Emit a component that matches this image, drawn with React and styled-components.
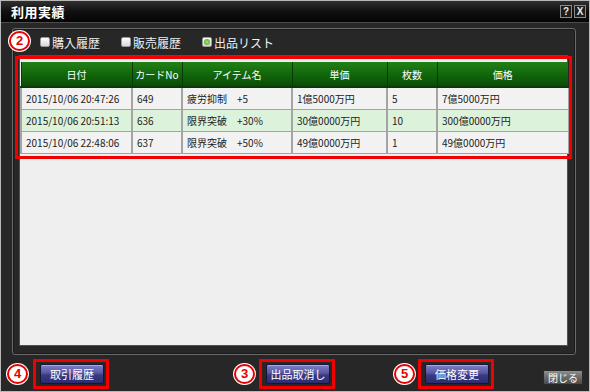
import styled, { createGlobalStyle } from "styled-components";

const GlobalStyle = createGlobalStyle`
  html, body {
    margin: 0;
    padding: 0;
    background: #c0c0c0;
  }
  body {
    font-family: "Noto Sans CJK JP", "Noto Sans", sans-serif;
  }
`;

const columns = [
  { key: "date", label: "日付", width: 111 },
  { key: "card", label: "カードNo", width: 50 },
  { key: "item", label: "アイテム名", width: 110 },
  { key: "unit", label: "単価", width: 95 },
  { key: "qty", label: "枚数", width: 50 },
  { key: "price", label: "価格", width: 131 },
];

const rows = [
  { date: "2015/10/06 20:47:26", card: "649", item: "疲労抑制　+5", unit: "1億5000万円", qty: "5", price: "7億5000万円" },
  { date: "2015/10/06 20:51:13", card: "636", item: "限界突破　+30%", unit: "30億0000万円", qty: "10", price: "300億0000万円" },
  { date: "2015/10/06 22:48:06", card: "637", item: "限界突破　+50%", unit: "49億0000万円", qty: "1", price: "49億0000万円" },
];

const Window = styled.div`
  width: 590px;
  height: 392px;
  box-sizing: border-box;
  border: 1px solid #b8b8b8;
  background: #272727;
  display: flex;
  flex-direction: column;
`;

const TitleBar = styled.div`
  height: 21px;
  flex-shrink: 0;
  display: flex;
  align-items: center;
  padding: 0 3px 0 10px;
  background: linear-gradient(#303030, #101010 50%, #050505);
  border-bottom: 1px solid #4c4c4c;
`;

const Title = styled.div`
  flex: 1;
  color: #fff;
  font-size: 13px;
  font-weight: bold;
  letter-spacing: 0.5px;
`;

const TitleButton = styled.div`
  width: 10px;
  height: 11px;
  margin-left: 2px;
  border: 1px solid #8a8a8a;
  background: #1c1c1c;
  color: #e8e8e8;
  font-family: "Liberation Sans", sans-serif;
  font-size: 10px;
  font-weight: bold;
  line-height: 11px;
  text-align: center;
`;

const Content = styled.div`
  flex: 1;
  display: flex;
  flex-direction: column;
  padding: 5px 13px 0 11px;
`;

const Group = styled.div`
  position: relative;
  height: 327px;
  box-sizing: border-box;
  border: 1px solid #6a6a6a;
  border-radius: 3px;
  box-shadow: inset 0 0 0 1px #1a1a1a;
  padding: 0 7px 8px 6px;
  display: flex;
  flex-direction: column;
`;

const OptionRow = styled.div`
  height: 26px;
  display: flex;
  align-items: center;
  padding-left: 21px;
  gap: 21px;
`;

const Option = styled.label`
  display: flex;
  align-items: center;
  gap: 2px;
  color: #f0f0f0;
  font-size: 12px;
`;

const Box = styled.span`
  width: 10px;
  height: 10px;
  border-radius: 2px;
  background: linear-gradient(#ffffff, #d8d8d8);
  border: 1px solid #9a9a9a;
  box-sizing: border-box;
  display: flex;
  align-items: center;
  justify-content: center;
  &::after {
    content: "";
    display: ${(p) => (p.$checked ? "block" : "none")};
    width: 6px;
    height: 6px;
    border-radius: 50%;
    background: radial-gradient(#a8e870, #3f9a1a);
  }
`;

const ListBox = styled.div`
  flex: 1;
  background: #efefef;
  border: 1px solid #505050;
  padding-top: 6px;
`;

const Highlight = styled.div`
  position: relative;
  &::after {
    content: "";
    position: absolute;
    top: -6px;
    left: -5px;
    right: -5px;
    bottom: -5px;
    border: 3px solid #f00000;
    pointer-events: none;
  }
`;

const Table = styled.table`
  width: 547px;
  border-collapse: collapse;
  table-layout: fixed;
  font-size: 10px;
`;

const Th = styled.th`
  height: 24px;
  padding: 0;
  font-weight: normal;
  color: #ffffff;
  background: linear-gradient(#237f17, #136a0c 45%, #0b4d06);
  border-left: 1px solid #0a3a05;
  border-bottom: 2px solid #0a3a05;
`;

const Tr = styled.tr`
  background: ${(p) => (p.$alt ? "#dcf2da" : "#f2f2f2")};
`;

const Td = styled.td`
  height: 21px;
  padding: 0 4px;
  color: #1c1c1c;
  white-space: nowrap;
  border: 1px solid #a4a4a4;
  border-left-width: 2px;
`;

const BottomBar = styled.div`
  flex: 1;
  display: flex;
  align-items: center;
  margin: 0 -12px 0 -5px;
  padding-top: 2px;
`;

const Marker = styled.span`
  width: 17px;
  height: 16px;
  flex-shrink: 0;
  border-radius: 50%;
  background: #ffffff;
  border: 2px solid #e80000;
  box-shadow: 0 0 0 1px #ffffff;
  color: #e80000;
  font-family: "Liberation Sans", sans-serif;
  font-size: 13px;
  font-weight: bold;
  line-height: 16px;
  text-align: center;
`;

const GroupMarker = styled(Marker)`
  position: absolute;
  left: -4px;
  top: 2px;
`;

const Annotated = styled.div`
  display: flex;
  align-items: center;
  gap: ${(p) => p.$gap}px;
  margin-left: ${(p) => p.$offset}px;
`;

const RedBox = styled.div`
  border: 3px solid #f00000;
  padding: 2px 2px 2px 4px;
  display: flex;
`;

const PurpleButton = styled.button`
  width: 64px;
  height: 20px;
  padding: 0;
  border: 1px solid #15153a;
  border-radius: 2px;
  background: linear-gradient(#8080c4, #5656a4 45%, #3a3a86 55%, #2c2c6c);
  box-shadow: inset 0 1px 0 rgba(255, 255, 255, 0.35);
  color: #ffffff;
  font-family: "Noto Sans CJK JP", sans-serif;
  font-size: 11px;
`;

const CloseButton = styled.button`
  margin-left: auto;
  margin-right: 5px;
  margin-top: 6px;
  width: 40px;
  height: 15px;
  padding: 0;
  border: 1px solid #2a2a2a;
  background: linear-gradient(#8e8e8e, #6a6a6a 50%, #4a4a4a);
  color: #ffffff;
  font-family: "Noto Sans CJK JP", sans-serif;
  font-size: 10px;
  line-height: 13px;
`;

export default function App() {
  return (
    <>
      <GlobalStyle />
      <Window>
        <TitleBar>
          <Title>利用実績</Title>
          <TitleButton>?</TitleButton>
          <TitleButton>X</TitleButton>
        </TitleBar>
        <Content>
          <Group>
            <GroupMarker>2</GroupMarker>
            <OptionRow>
              <Option>
                <Box />
                購入履歴
              </Option>
              <Option>
                <Box />
                販売履歴
              </Option>
              <Option>
                <Box $checked />
                出品リスト
              </Option>
            </OptionRow>
            <ListBox>
              <Highlight>
                <Table>
                  <colgroup>
                    {columns.map((c) => (
                      <col key={c.key} style={{ width: c.width }} />
                    ))}
                  </colgroup>
                  <thead>
                    <tr>
                      {columns.map((c) => (
                        <Th key={c.key}>{c.label}</Th>
                      ))}
                    </tr>
                  </thead>
                  <tbody>
                    {rows.map((r, i) => (
                      <Tr key={r.date} $alt={i === 1}>
                        {columns.map((c) => (
                          <Td key={c.key}>{r[c.key]}</Td>
                        ))}
                      </Tr>
                    ))}
                  </tbody>
                </Table>
              </Highlight>
            </ListBox>
          </Group>
          <BottomBar>
            <Annotated $gap={5} $offset={0}>
              <Marker>4</Marker>
              <RedBox>
                <PurpleButton>取引履歴</PurpleButton>
              </RedBox>
            </Annotated>
            <Annotated $gap={4} $offset={125}>
              <Marker>3</Marker>
              <RedBox>
                <PurpleButton>出品取消し</PurpleButton>
              </RedBox>
            </Annotated>
            <Annotated $gap={3} $offset={59}>
              <Marker>5</Marker>
              <RedBox>
                <PurpleButton>価格変更</PurpleButton>
              </RedBox>
            </Annotated>
            <CloseButton>閉じる</CloseButton>
          </BottomBar>
        </Content>
      </Window>
    </>
  );
}
